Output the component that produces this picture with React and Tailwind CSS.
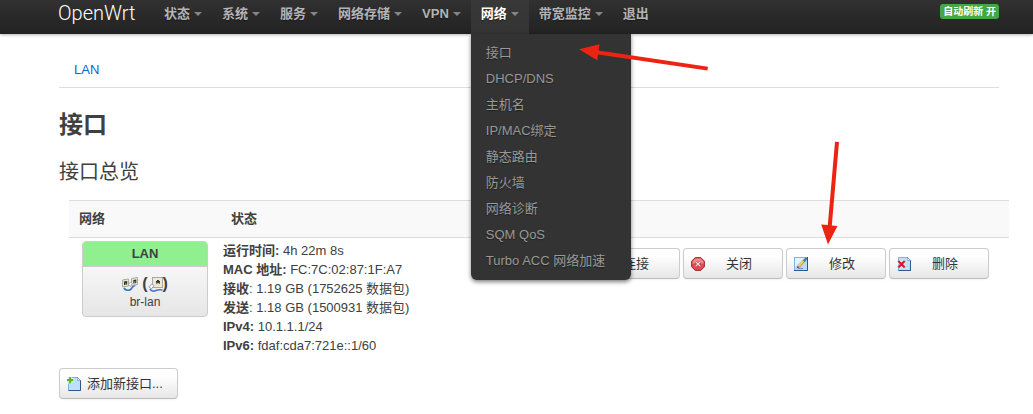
import React from "react";

const menus = [
  { label: "状态", caret: true },
  { label: "系统", caret: true },
  { label: "服务", caret: true },
  { label: "网络存储", caret: true },
  { label: "VPN", caret: true },
  {
    label: "网络",
    caret: true,
    open: true,
    items: [
      "接口",
      "DHCP/DNS",
      "主机名",
      "IP/MAC绑定",
      "静态路由",
      "防火墙",
      "网络诊断",
      "SQM QoS",
      "Turbo ACC 网络加速",
    ],
  },
  { label: "带宽监控", caret: true },
  { label: "退出" },
];

const stats = [
  ["运行时间:", "", "4h 22m 8s"],
  ["MAC 地址:", "", "FC:7C:02:87:1F:A7"],
  ["接收", ":", "1.19 GB (1752625 数据包)"],
  ["发送", ":", "1.18 GB (1500931 数据包)"],
  ["IPv4:", "", "10.1.1.1/24"],
  ["IPv6:", "", "fdaf:cda7:721e::1/60"],
];

function ReloadIcon() {
  return (
    <svg viewBox="0 0 14 14" className="size-3.5" aria-hidden="true">
      <path d="M2 7a5 5 0 0 1 9-3M12 7a5 5 0 0 1-9 3" fill="none" stroke="#3a9a32" strokeWidth="2" />
      <path d="M9 5h4V1zM5 9H1v4z" fill="#3a9a32" />
    </svg>
  );
}

function StopIcon() {
  return (
    <svg viewBox="0 0 14 14" className="size-3.5" aria-hidden="true">
      <path d="M4.2.6h5.6l3.6 3.6v5.6l-3.6 3.6H4.2L.6 9.800V4.200z" fill="#dc4b52" stroke="#a3272e" strokeWidth="1" />
      <path d="M4.600 1.600h4.800l3 3v2.200c-3-1-7.800-1-10.800 0V4.600z" fill="#ef8b8f" />
      <path d="M4.600 4.600l4.800 4.800M9.400 4.600l-4.800 4.800" stroke="#b8434a" strokeWidth="2.400" />
      <path d="M4.600 4.600l4.800 4.800M9.400 4.600l-4.800 4.800" stroke="#ffe9e9" strokeWidth="1.100" />
    </svg>
  );
}

function EditIcon() {
  return (
    <svg viewBox="0 0 14 14" className="size-3.5" aria-hidden="true">
      <rect x=".5" y=".5" width="13" height="13" fill="#b5dcfb" stroke="#7fb0e0" />
      <path d="M13.500 0v13.500H0" fill="none" stroke="#2b5488" strokeWidth="1" />
      <path d="M1 1h9L1 10z" fill="#e3f3ff" />
      <path d="M4.700 9.700l6-6.500" stroke="#c48a1c" strokeWidth="2.600" />
      <path d="M4.500 9.400l6-6.500" stroke="#ffd654" strokeWidth="1.600" />
      <path d="M9.800 4.200l2.900-3.200" stroke="#4472a8" strokeWidth="2.200" />
      <path d="M2.500 11.500l1.300-2.800 1.600 1.500z" fill="#5c4a28" />
      <path d="M4 11.500h5" stroke="#5c8ec0" strokeWidth="1" />
    </svg>
  );
}

function DeleteIcon() {
  return (
    <svg viewBox="0 0 14 14" className="size-3.5" aria-hidden="true">
      <path d="M1.500.5h9l3 3v10h-12z" fill="#bfe0fb" stroke="#82b1df" />
      <path d="M10.500.5l3 3v10h-12" fill="none" stroke="#30578c" strokeWidth="1" />
      <path d="M10.500.5v3h3z" fill="#fff" stroke="#5a8ec4" strokeWidth=".6" />
      <path d="M1.500 4.200l6 6M7.500 4.200l-6 6" stroke="#fff" strokeWidth="3.600" />
      <path d="M1.300 4l6.400 6.400M7.700 4l-6.400 6.400" stroke="#d5192b" strokeWidth="2.200" />
    </svg>
  );
}

function AddIcon() {
  return (
    <svg viewBox="0 0 14 14" className="size-3.5" aria-hidden="true">
      <path d="M1.500.5h9l3 3v10h-12z" fill="#bfe0fb" stroke="#82b1df" />
      <path d="M10.500.5l3 3v10h-12" fill="none" stroke="#30578c" strokeWidth="1" />
      <path d="M10.500.5v3h3z" fill="#fff" stroke="#5a8ec4" strokeWidth=".6" />
      <path d="M3.200 0v6.800M0 3.200h6.800" stroke="#fff" strokeWidth="3.400" />
      <path d="M3.200 0v6.400M0 3.200h6.400" stroke="#62b41f" strokeWidth="2.200" />
    </svg>
  );
}

function BridgeIcon() {
  return (
    <svg viewBox="0 0 16 14" className="h-3.5 w-4" aria-hidden="true">
      <path d="M2 11c1.500 3 6 3 7.500.5s2.500-2.500 3.500-3.500" fill="none" stroke="#3d7cc9" strokeWidth="1.800" />
      <path d="M.5 3l6-1v7l-6 1z" fill="#e6e6de" stroke="#a9a99e" />
      <path d="M2 4.500l3.200-.5v3.500l-3.200.5z" fill="#2e3527" />
      <path d="M9.500 1.500l6-1v7l-6 1z" fill="#e6e6de" stroke="#a9a99e" />
      <path d="M11.300 3l3-.4v3.400l-3 .4z" fill="#2e3527" />
      <path d="M12 5h1.500M3 7h1.500" stroke="#e0ba34" />
      <path d="M6.500 7.500l2-2.500 1.800 1.500-2 3z" fill="#fff" stroke="#8d9298" strokeWidth=".7" />
    </svg>
  );
}

function PortIcon() {
  return (
    <svg viewBox="0 0 15 15" className="size-[15px]" aria-hidden="true">
      <rect x="4.500" y=".5" width="10" height="10" fill="#e9e9e0" stroke="#aaa89c" />
      <path d="M8 4h1V3h2v1h1v3H8z" fill="#2e3527" />
      <path d="M8.500 6.500h3" stroke="#e6bf2d" strokeWidth="1.300" />
      <path d="M2 12c1 2.500 4 2.500 6 1.500s4-1 6.500-.5" fill="none" stroke="#3d7cc9" strokeWidth="1.600" />
      <path d="M.8 10l3-3.200L6 8.700 3.400 12z" fill="#f3f5f8" stroke="#8b9197" strokeWidth=".8" />
    </svg>
  );
}

const actions = [
  { label: "连接", Icon: ReloadIcon },
  { label: "关闭", Icon: StopIcon },
  { label: "修改", Icon: EditIcon },
  { label: "删除", Icon: DeleteIcon },
];

const buttonLook =
  "flex items-center rounded border border-[#ccc] border-b-[#bbb] bg-linear-to-b from-white from-25% to-[#e6e6e6] py-1.5 pl-[7px] leading-[17px] text-[#333] shadow-[0_1px_2px_rgba(0,0,0,0.05)]";

function Menu({ label, caret, open, items }) {
  return (
    <li className="relative">
      <a
        href="#"
        className={
          open
            ? "flex items-center gap-1 bg-linear-to-b from-[#383838] to-[#343434] px-2.5 pt-[5px] pb-[11px] font-bold text-white"
            : "flex items-center gap-1 px-2.5 pt-[5px] pb-[11px] font-bold text-[#b4b4b4]"
        }
      >
        {label}
        {caret && (
          <span className="border-x-4 border-t-4 border-x-transparent border-t-[#858585]" />
        )}
      </a>
      {items && (
        <ul className="absolute top-full left-0 z-10 w-40 rounded-b-md bg-[#333] py-1.5 text-[#999] shadow-[0_2px_4px_rgba(0,0,0,0.5)]">
          {items.map((item) => (
            <li key={item}>
              <a href="#" className="block px-[15px] py-1 whitespace-nowrap">
                {item}
              </a>
            </li>
          ))}
        </ul>
      )}
    </li>
  );
}

export default function App() {
  return (
    <div className="relative min-h-screen bg-white font-['Liberation_Sans','Noto_Sans_CJK_SC',sans-serif] text-[13px] leading-[18px] text-[#404040]">
      <header className="relative z-10 flex items-start bg-linear-to-b from-[#313131] to-[#222] pr-[34px] pl-[58px] shadow-[0_1px_3px_rgba(0,0,0,0.3)]">
        <a
          href="#"
          className="w-24 pt-[3px] font-['Roboto','Liberation_Sans',sans-serif] text-[20px] leading-5 font-light text-white"
        >
          OpenWrt
        </a>
        <nav>
          <ul className="flex [text-shadow:0_1px_1px_rgba(0,0,0,0.4)]">
            {menus.map((menu) => (
              <Menu key={menu.label} {...menu} />
            ))}
          </ul>
        </nav>
        <button
          type="button"
          className="mt-1 ml-auto rounded-[3px] bg-[#46a546] px-[3px] text-[10px] leading-[15px] font-bold text-white"
        >
          自动刷新 开
        </button>
      </header>

      <main className="pr-[34px] pl-[59px]">
        <ul className="flex border-b border-[#ddd] pt-[18px]">
          <li>
            <a href="#" className="block px-[15px] leading-[35px] font-medium text-[#0069d6]">
              LAN
            </a>
          </li>
        </ul>

        <h2 className="pt-[19px] text-[24px] leading-9 font-bold">接口</h2>
        <h3 className="pt-[11px] text-[20px] leading-9">接口总览</h3>

        <div className="-mr-2.5 ml-2.5 pt-2.5">
          <table className="w-full border-collapse">
            <thead>
              <tr className="border-y border-[#ddd] bg-[#f9f9f9] text-left">
                <th className="w-[152px] px-2.5 py-[9px] font-bold">网络</th>
                <th className="px-2.5 py-[9px] font-bold">状态</th>
                <th className="px-2.5 py-[9px]" aria-label="操作" />
              </tr>
            </thead>
            <tbody>
              <tr className="align-top">
                <td className="pt-[3px] pr-[13px] pl-[13px]">
                  <div className="overflow-hidden rounded border border-[#ccc] bg-linear-to-b from-white to-[#e6e6e6] text-center">
                    <div className="border-b border-[#ccc] bg-[#90f090] leading-6 font-bold">LAN</div>
                    <div className="flex items-center justify-center pt-2 text-[16px] font-bold">
                      <BridgeIcon />
                      <span className="pl-1">(</span>
                      <PortIcon />
                      <span>)</span>
                    </div>
                    <div className="pb-[5px] text-[12px]">br-lan</div>
                  </div>
                </td>
                <td className="pt-[3px] pl-0.5 leading-[19px]">
                  {stats.map(([name, mark, value]) => (
                    <div key={name} className="whitespace-nowrap">
                      <strong>{name}</strong>
                      {mark} {value}
                    </div>
                  ))}
                </td>
                <td className="pt-2.5 pr-5">
                  <div className="flex justify-end gap-[3px]">
                    {actions.map(({ label, Icon }) => (
                      <button key={label} type="button" className={`${buttonLook} w-[100px] pr-[9px]`}>
                        <Icon />
                        <span className="flex-1 text-center">{label}</span>
                      </button>
                    ))}
                  </div>
                </td>
              </tr>
            </tbody>
          </table>
        </div>

        <button type="button" className={`${buttonLook} mt-[13px] gap-1.5 pr-3.5`}>
          <AddIcon />
          添加新接口...
        </button>
      </main>

      <svg
        viewBox="0 0 130 32"
        className="pointer-events-none absolute top-[42px] left-[579px] z-20 h-8 w-[130px]"
        aria-hidden="true"
      >
        <path d="M0 7.300L20.500 2.200 19.600 8.600 129 24.800 128.400 28.600 19 12.600 18.300 18.200z" fill="#ec2413" />
      </svg>
      <svg
        viewBox="0 0 20 104"
        className="pointer-events-none absolute top-[141px] left-[820px] z-20 h-[104px] w-5"
        aria-hidden="true"
      >
        <path d="M15 .7L19 1 11.800 84.400 17.500 84.900 8 103.500 1.200 83.500 7.800 84.100z" fill="#ec2413" />
      </svg>
    </div>
  );
}
